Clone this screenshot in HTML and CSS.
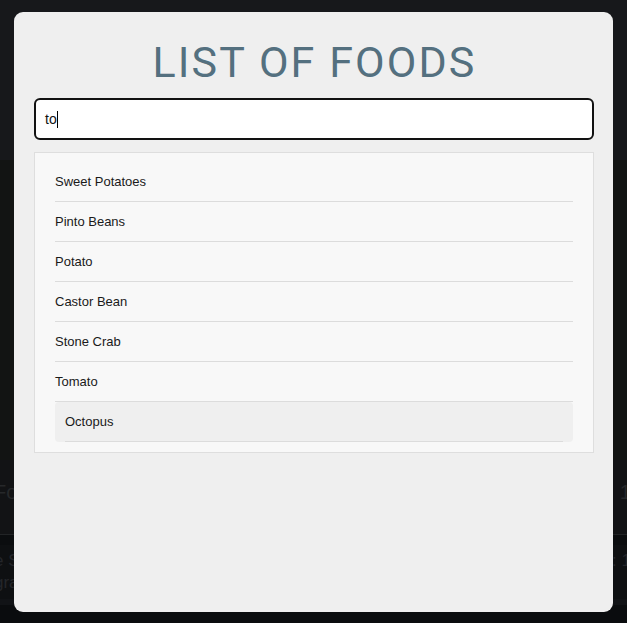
FILE: index.html
```html
<!DOCTYPE html>
<html>
<head>
<meta charset="utf-8">
<link rel="stylesheet" href="styles.css">
</head>
<body>
<div class="page">
  <div class="band band-top"></div>
  <div class="band band-mid"></div>
  <div class="band band-row"><span class="faint-l">Fo</span><span class="faint-r">: 1</span></div>
  <div class="band band-foot">
    <div class="foot-line"><span class="faint-l">e S</span><span class="faint-r">: 1</span></div>
    <div class="foot-line"><span class="faint-l">gra</span></div>
  </div>
  <div class="band band-bottom"></div>
</div>

<div class="modal">
  <h1 class="title">LIST OF FOODS</h1>
  <div class="search"><span class="search-text">to</span><span class="caret"></span></div>
  <ul class="results">
    <li class="item">Sweet Potatoes</li>
    <li class="item">Pinto Beans</li>
    <li class="item">Potato</li>
    <li class="item">Castor Bean</li>
    <li class="item">Stone Crab</li>
    <li class="item">Tomato</li>
    <li class="item item-active">Octopus</li>
  </ul>
</div>
</body>
</html>
```

FILE: styles.css
```css
* { box-sizing: border-box; }
html, body { margin: 0; padding: 0; }
body {
  width: 627px;
  height: 623px;
  overflow: hidden;
  background: #0b0d0f;
  font-family: "Liberation Sans", Arial, sans-serif;
}
.page {
  display: flex;
  flex-direction: column;
  height: 623px;
}
.band { flex: none; }
.band-top { height: 160px; background: #17181b; }
.band-mid { height: 300px; background: #121413; }
.band-row {
  height: 75px;
  background: #121315;
  display: flex;
  justify-content: space-between;
  align-items: center;
  font-size: 20px;
  color: #26282a;
  border-bottom: 1px solid #222426;
  padding-bottom: 10px;
}
.band-foot {
  height: 60px;
  background: #0e1012;
  margin-top: 10px;
  display: flex;
  flex-direction: column;
  justify-content: center;
  font-size: 17px;
  color: #24262a;
  border-bottom: 6px solid #111316;
}
.foot-line { display: flex; justify-content: space-between; line-height: 22px; }
.faint-l { margin-left: -6px; }
.faint-r { margin-right: -4px; }
.band-bottom { flex: 1; background: #0a0c0e; }

.modal {
  position: absolute;
  left: 14px;
  top: 12px;
  width: 599px;
  height: 600px;
  background: #efefef;
  border-radius: 9px;
  padding: 0 19px 0 20px;
}
.title {
  margin: 24px 0 0;
  text-align: center;
  font-family: Roboto, "Liberation Sans", sans-serif;
  font-weight: 400;
  font-size: 43px;
  line-height: 52px;
  color: #54707f;
  letter-spacing: 2.1px;
  padding-left: 1px;
}
.search {
  margin-top: 10px;
  height: 42px;
  background: #ffffff;
  border: 2px solid #121212;
  border-radius: 6px;
  padding: 0 9px;
  display: flex;
  align-items: center;
  font-size: 14px;
  color: #111;
}
.caret {
  display: inline-block;
  width: 1px;
  height: 17px;
  background: #000;
  margin-left: 0;
}
.results {
  list-style: none;
  margin: 12px 0 0;
  padding: 9px 20px 10px;
  background: #f8f8f8;
  border: 1px solid #dedede;
}
.item {
  height: 40px;
  display: flex;
  align-items: center;
  font-size: 13px;
  color: #1a1a1a;
  border-bottom: 1px solid #dcdcdc;
}
.item-active {
  background: #efefef;
  border-radius: 4px;
  padding-left: 10px;
  padding-bottom: 1px;
  border-bottom: none;
  position: relative;
}
.item-active::after {
  content: "";
  position: absolute;
  left: 10px;
  right: 10px;
  bottom: 0;
  height: 1px;
  background: #dcdcdc;
}
```
